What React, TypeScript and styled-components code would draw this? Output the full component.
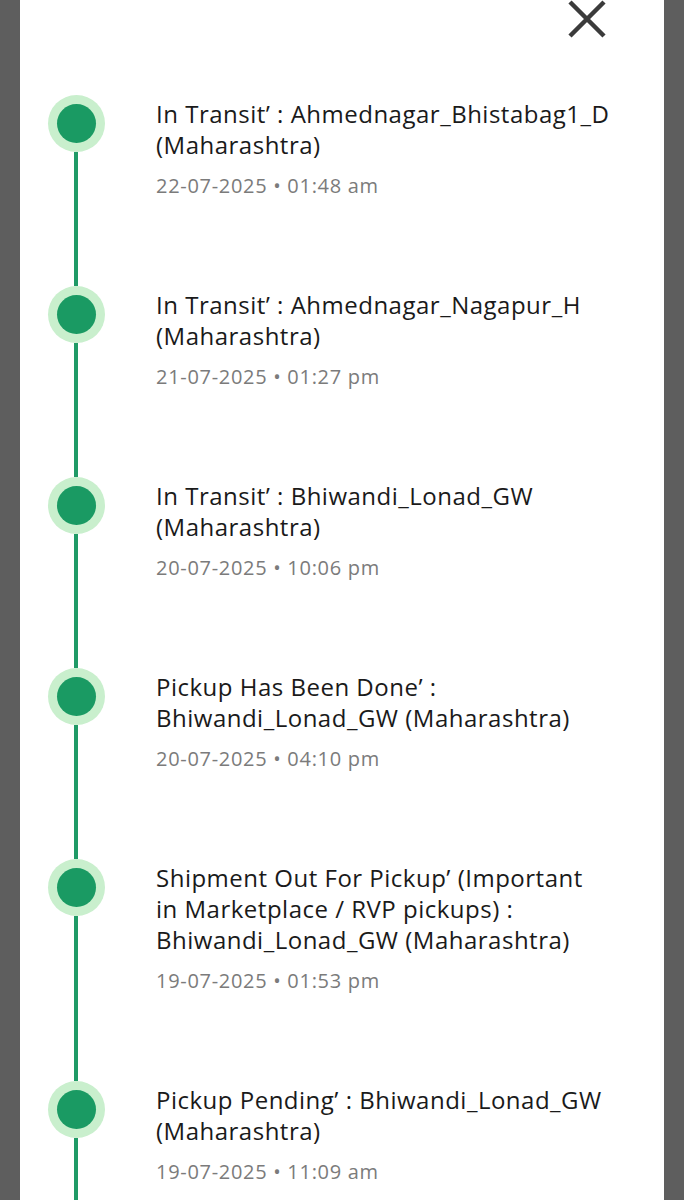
import styled, { createGlobalStyle } from 'styled-components';

const GlobalStyle = createGlobalStyle`
  html, body {
    margin: 0;
    padding: 0;
    background: #5e5e5e;
  }
  body {
    font-family: 'Open Sans', Roboto, sans-serif;
  }
`;

interface TrackEvent {
  lines: string[];
  time: string;
}

// lines are kept as the app wraps them
const events: TrackEvent[] = [
  {
    lines: ['In Transit\u2019 : Ahmednagar_Bhistabag1_D', '(Maharashtra)'],
    time: '22-07-2025 \u2022 01:48 am',
  },
  {
    lines: ['In Transit\u2019 : Ahmednagar_Nagapur_H', '(Maharashtra)'],
    time: '21-07-2025 \u2022 01:27 pm',
  },
  {
    lines: ['In Transit\u2019 : Bhiwandi_Lonad_GW', '(Maharashtra)'],
    time: '20-07-2025 \u2022 10:06 pm',
  },
  {
    lines: ['Pickup Has Been Done\u2019 :', 'Bhiwandi_Lonad_GW (Maharashtra)'],
    time: '20-07-2025 \u2022 04:10 pm',
  },
  {
    lines: [
      'Shipment Out For Pickup\u2019 (Important',
      'in Marketplace / RVP pickups) :',
      'Bhiwandi_Lonad_GW (Maharashtra)',
    ],
    time: '19-07-2025 \u2022 01:53 pm',
  },
  {
    lines: ['Pickup Pending\u2019 : Bhiwandi_Lonad_GW', '(Maharashtra)'],
    time: '19-07-2025 \u2022 11:09 am',
  },
];

const Page = styled.div`
  height: 1200px;
  padding: 0 20px;
  box-sizing: border-box;
  overflow: hidden;
`;

const Sheet = styled.div`
  background: #ffffff;
  min-height: 1200px;
  padding-left: 28px;
  padding-right: 20px;
`;

const Header = styled.div`
  height: 95px;
  display: flex;
  justify-content: flex-end;
  align-items: flex-start;
  padding-right: 37px;
`;

const CloseButton = styled.button`
  border: none;
  background: none;
  padding: 0;
  width: 40px;
  height: 40px;
  cursor: pointer;
  display: flex;
`;

const Timeline = styled.ol`
  list-style: none;
  margin: 0;
  padding: 0;
`;

const Item = styled.li`
  display: grid;
  grid-template-columns: 57px 1fr;
  column-gap: 51px;
`;

const Rail = styled.div`
  display: flex;
  flex-direction: column;
  align-items: center;
`;

const Dot = styled.div`
  width: 57px;
  height: 57px;
  border-radius: 50%;
  background: #c9efcd;
  display: flex;
  align-items: center;
  justify-content: center;
  flex-shrink: 0;

  &::after {
    content: '';
    width: 39px;
    height: 39px;
    border-radius: 50%;
    background: #1a9a63;
  }
`;

const Line = styled.div`
  width: 4px;
  flex: 1;
  background: #1f9a66;
  margin-left: -1px;
`;

const Body = styled.div`
  padding-top: 3px;
  padding-bottom: 86px;
`;

const Title = styled.div`
  font-size: 24px;
  line-height: 31px;
  letter-spacing: 0.5px;
  color: #1a1a1a;
  white-space: nowrap;
`;

const TitleLine = styled.div``;

const Time = styled.div`
  margin-top: 12px;
  font-size: 20px;
  line-height: 28px;
  letter-spacing: 0.7px;
  color: #7b7b7b;
  white-space: nowrap;
`;

export default function App() {
  return (
    <>
      <GlobalStyle />
      <Page>
        <Sheet>
          <Header>
            <CloseButton type='button' aria-label='Close'>
              <svg width='40' height='40' viewBox='0 0 40 40'>
                <path
                  d='M3 2 L37 36 M37 2 L3 36'
                  stroke='#3b3b3b'
                  strokeWidth='4.5'
                  fill='none'
                />
              </svg>
            </CloseButton>
          </Header>
          <Timeline>
            {events.map((ev) => (
              <Item key={ev.time}>
                <Rail>
                  <Dot />
                  <Line />
                </Rail>
                <Body>
                  <Title>
                    {ev.lines.map((l) => (
                      <TitleLine key={l}>{l}</TitleLine>
                    ))}
                  </Title>
                  <Time>{ev.time}</Time>
                </Body>
              </Item>
            ))}
          </Timeline>
        </Sheet>
      </Page>
    </>
  );
}
